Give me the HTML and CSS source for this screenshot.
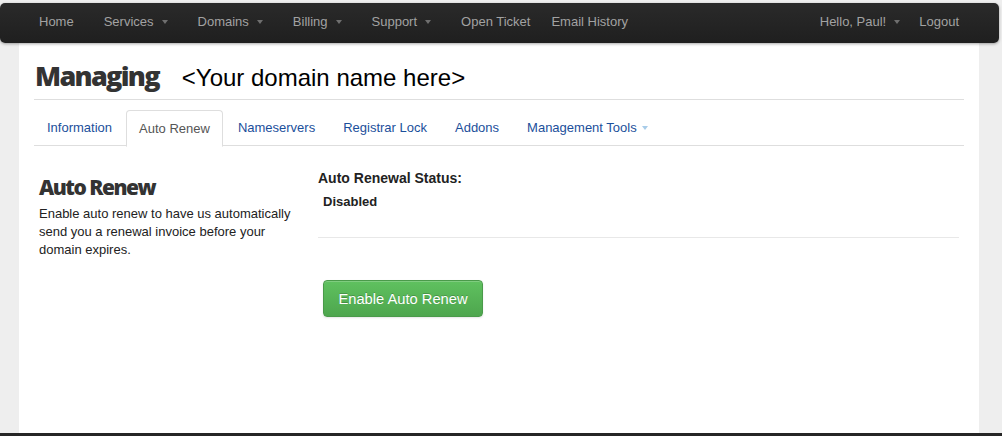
FILE: index.html
```html
<!DOCTYPE html>
<html>
<head>
<meta charset="utf-8">
<link rel="stylesheet" href="styles.css">
</head>
<body>
<div class="navbar">
  <ul class="nav">
    <li><a>Home</a></li>
    <li><a>Services<span class="caret"></span></a></li>
    <li><a>Domains<span class="caret"></span></a></li>
    <li><a>Billing<span class="caret"></span></a></li>
    <li><a>Support<span class="caret"></span></a></li>
    <li class="ticket"><a>Open Ticket</a></li>
    <li class="history"><a>Email History</a></li>
  </ul>
  <ul class="nav nav-right">
    <li class="hello"><a>Hello, Paul!<span class="caret"></span></a></li>
    <li class="logout"><a>Logout</a></li>
  </ul>
</div>
<div class="container">
  <div class="page-header">
    <h1>Managing</h1>
    <span class="domain">&lt;Your domain name here&gt;</span>
  </div>
  <ul class="tabs">
    <li><a>Information</a></li>
    <li class="active"><a>Auto Renew</a></li>
    <li><a>Nameservers</a></li>
    <li><a>Registrar Lock</a></li>
    <li><a>Addons</a></li>
    <li><a>Management Tools<span class="caret caret-blue"></span></a></li>
  </ul>
  <div class="row">
    <div class="side">
      <h2>Auto Renew</h2>
      <p>Enable auto renew to have us automatically send you a renewal invoice before your domain expires.</p>
    </div>
    <div class="main">
      <div class="status-label">Auto Renewal Status:</div>
      <div class="status-value">Disabled</div>
      <hr class="divider">
      <button class="btn-success">Enable Auto Renew</button>
    </div>
  </div>
</div>
<div class="footer"></div>
</body>
</html>
```

FILE: styles.css
```css
* { box-sizing: border-box; }
html, body { margin: 0; padding: 0; }
body {
  background: #eeeeee;
  font-family: "Liberation Sans", Arial, sans-serif;
  font-size: 13px;
  color: #333;
  height: 436px;
  overflow: hidden;
}
.navbar {
  margin: 3px 3px 0 0;
  height: 40px;
  border-radius: 5px;
  background: linear-gradient(#2a2a2a, #1f1f1f);
  box-shadow: 0 1px 3px rgba(0,0,0,0.35);
  display: flex;
  justify-content: space-between;
  padding: 0 25px 0 24px;
  position: relative;
  z-index: 2;
}
.nav {
  list-style: none;
  margin: 0;
  padding: 0;
  display: flex;
}
.nav li a {
  display: flex;
  align-items: center;
  height: 40px;
  padding: 0 15px 4px;
  color: #a2a2a2;
  font-size: 13px;
  white-space: pre;
}
.nav li a .caret { margin-left: 8px; }
.nav li.history a { padding-left: 6px; }
.nav li.hello a { padding-right: 7px; }
.nav li.hello a .caret { margin-left: 8px; }
.nav li.logout a { padding-left: 12px; padding-right: 15px; }
.caret {
  display: inline-block;
  width: 0;
  height: 0;
  border-top: 4px solid #6f6f6f;
  border-left: 3.5px solid transparent;
  border-right: 3.5px solid transparent;
  margin-top: 1px;
}
.caret-blue { border-top-color: #a8cce9; }
.container {
  margin: 0 23px 0 19px;
  background: #fff;
  height: 390px;
  padding: 0 15px;
}
.page-header {
  display: flex;
  align-items: baseline;
  border-bottom: 1px solid #dedede;
  height: 57px;
  padding-top: 15px;
}
.page-header h1 {
  margin: 0 0 0 1px;
  font-family: "Open Sans", sans-serif;
  font-weight: 800;
  font-size: 27px;
  letter-spacing: -1.7px;
  color: #333;
  line-height: 36px;
}
.domain {
  font-size: 24px;
  color: #000;
  margin-left: 23px;
}
.tabs {
  list-style: none;
  margin: 10px 0 0;
  padding: 0;
  display: flex;
  border-bottom: 1px solid #dedede;
  height: 36px;
}
.tabs li { margin-right: 2px; }
.tabs li:first-child { margin-right: 1px; }
.tabs li a {
  display: flex;
  align-items: center;
  height: 36px;
  padding: 0 12px 1px;
  border: 1px solid transparent;
  border-radius: 4px 4px 0 0;
  color: #1b4f9b;
  white-space: pre;
}
.tabs li.active a {
  color: #555;
  background: #fff;
  border-color: #dedede #dedede transparent;
  height: 37px;
}
.tabs .caret { margin-left: 5px; }
.row {
  display: flex;
  padding-top: 22px;
}
.side {
  width: 284px;
  padding-left: 5px;
}
.side h2 {
  margin: 5px 0 0;
  font-family: "Open Sans", sans-serif;
  font-weight: 800;
  font-size: 21px;
  letter-spacing: -1.5px;
  line-height: 28px;
  color: #333;
}
.side p {
  margin: 4px 0 0;
  line-height: 18px;
  font-size: 13px;
  color: #222;
  width: 260px;
}
.main {
  flex: 1;
  padding-right: 5px;
}
.status-label {
  font-weight: bold;
  font-size: 14px;
  color: #222;
  line-height: 20px;
  margin-top: 0;
}
.status-value {
  font-weight: bold;
  font-size: 13px;
  color: #222;
  padding-left: 5px;
  margin-top: 5px;
  line-height: 18px;
}
.divider {
  border: 0;
  border-top: 1px solid #e8e8e8;
  margin: 26px 0 0;
}
.btn-success {
  margin: 42px 0 0 5px;
  width: 160px;
  height: 37px;
  border: 1px solid #4a9a4a;
  border-radius: 4px;
  background: linear-gradient(#5fc15f, #4ea64e);
  color: #fff;
  font-family: "Liberation Sans", Arial, sans-serif;
  font-size: 14.7px;
  text-shadow: 0 -1px 0 rgba(0,0,0,0.2);
  box-shadow: inset 0 1px 0 rgba(255,255,255,0.2), 0 1px 2px rgba(0,0,0,0.1);
  padding: 0;
}
.footer {
  height: 10px;
  background: #262626;
}
```
